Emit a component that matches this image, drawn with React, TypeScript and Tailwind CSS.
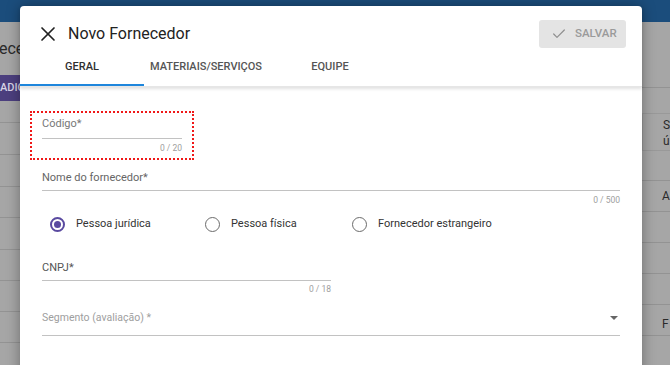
import { X, Check } from "lucide-react"

function Radio({ label, checked, width }: { label: string; checked?: boolean; width: string }) {
  return (
    <div className={`flex items-center ${width}`}>
      {checked ? (
        <span className="w-[15px] h-[15px] rounded-full border-2 border-[#5a4aa0] flex items-center justify-center">
          <span className="w-[7px] h-[7px] rounded-full bg-[#5a4aa0]" />
        </span>
      ) : (
        <span className="w-[15px] h-[15px] rounded-full border-[1.5px] border-[#6b6b6b]" />
      )}
      <span className="ml-[11px] text-[11px] text-[#333]">{label}</span>
    </div>
  )
}

export default function App() {
  return (
    <div className="relative w-[670px] h-[365px] overflow-hidden bg-[#a6a6a6] font-['Roboto',sans-serif]">
      {/* page behind the dialog, dimmed */}
      <div className="h-[22px] bg-[#1b4d7c]" />
      <div className="flex justify-between">
        {/* left strip */}
        <div className="w-[20px] overflow-hidden">
          <div className="h-[53px] flex items-center text-[16px] text-[#2a2a2a] whitespace-nowrap">
            <span className="-ml-[1px]">ece</span>
          </div>
          <div className="h-[26px] bg-[#4c3f7e] flex items-center text-[11px] font-medium text-[#d8d4e6] whitespace-nowrap">
            ADIC
          </div>
          <div className="h-[22px] border-b border-[#939393]" />
          <div className="h-[32px] border-b border-[#939393]" />
          <div className="h-[32px] border-b border-[#939393]" />
          <div className="h-[31px] border-b border-[#939393]" />
          <div className="h-[32px] border-b border-[#939393]" />
          <div className="h-[31px] border-b border-[#939393]" />
          <div className="h-[31px] border-b border-[#939393]" />
          <div className="h-[31px] border-b border-[#939393]" />
        </div>
        {/* right strip */}
        <div className="w-[28px] overflow-hidden text-[12px] text-[#2a2a2a]">
          <div className="h-[66px] border-b border-[#939393]" />
          <div className="h-[25px]" />
          <div className="h-[38px] border-l border-y border-[#999] pl-[20px] leading-[16px] pt-[3px]">
            <div>S</div>
            <div>ú</div>
          </div>
          <div className="h-[30px] border-b border-[#939393]" />
          <div className="h-[31px] border-b border-[#939393] pl-[20px] flex items-center">A</div>
          <div className="h-[31px] border-b border-[#939393]" />
          <div className="h-[31px] border-b border-[#939393]" />
          <div className="h-[31px] border-b border-[#939393]" />
          <div className="h-[31px] border-b border-[#939393] pl-[20px] flex items-end pb-[2px]">F</div>
        </div>
      </div>

      {/* dialog */}
      <div className="absolute left-[20px] top-[6px] w-[622px] h-[380px] bg-white rounded-t-[4px] shadow-[0_0_14px_rgba(0,0,0,0.35)]">
        <div className="shadow-[0_2px_3px_rgba(0,0,0,0.12)] border-b border-[#e6e6e6]">
          {/* header */}
          <div className="flex items-center justify-between pt-[14px] pl-[16px] pr-[16px]">
            <div className="flex items-center h-[28px]">
              <X size={24} strokeWidth={1.7} className="text-[#222]" />
              <span className="ml-[8px] text-[16px] text-[#222]">Novo Fornecedor</span>
            </div>
            <button className="w-[87px] h-[28px] rounded-[3px] bg-[#e4e4e4] flex items-center pl-[12px]">
              <Check size={16} strokeWidth={1.8} className="text-[#8f8f8f]" />
              <span className="ml-[8px] text-[11.5px] font-medium text-[#9a9a9a]">SALVAR</span>
            </button>
          </div>
          {/* tabs */}
          <div className="flex h-[38px] text-[11px] font-medium">
            <div className="w-[124px] flex items-center justify-center text-[#2f2f2f] border-b-2 border-[#1e86dc] pt-[2px]">GERAL</div>
            <div className="w-[124px] flex items-center justify-center text-[#555] border-b-2 border-transparent pt-[2px]">MATERIAIS/SERVIÇOS</div>
            <div className="w-[124px] flex items-center justify-center text-[#555] border-b-2 border-transparent pt-[2px]">EQUIPE</div>
          </div>
        </div>

        {/* form */}
        <div className="px-[22px] pt-[24px]">
          <div className="w-[164px] -ml-[12px] border-2 border-dotted border-[#f01818] px-[10px] pt-[3px] pb-[4px]">
            <div className="text-[11px] leading-[16px] text-[#777]">Código*</div>
            <div className="mt-[6px] h-px bg-[#c2c2c2]" />
            <div className="mt-[3px] text-right text-[8.5px] leading-[12px] text-[#9e9e9e]">0 / 20</div>
          </div>

          <div className="mt-[10px] text-[11px] leading-[16px] text-[#666]">Nome do fornecedor*</div>
          <div className="mt-[4px] h-px bg-[#c2c2c2]" />
          <div className="mt-[3px] text-right text-[8.5px] leading-[12px] text-[#9e9e9e]">0 / 500</div>

          <div className="mt-[8px] h-[20px] flex items-center pl-[8px]">
            <Radio label="Pessoa jurídica" checked width="w-[155px]" />
            <Radio label="Pessoa física" width="w-[147px]" />
            <Radio label="Fornecedor estrangeiro" width="w-[200px]" />
          </div>

          <div className="w-[289px]">
            <div className="mt-[26px] text-[11px] leading-[16px] text-[#555]">CNPJ*</div>
            <div className="mt-[4px] h-px bg-[#c2c2c2]" />
            <div className="mt-[2px] text-right text-[8.5px] leading-[12px] text-[#9e9e9e]">0 / 18</div>
          </div>

          <div className="mt-[15px] flex items-center justify-between">
            <span className="text-[10.5px] leading-[16px] text-[#9e9e9e]">Segmento (avaliação) *</span>
            <span className="mr-[2px] w-0 h-0 border-l-[4px] border-r-[4px] border-t-[4px] border-l-transparent border-r-transparent border-t-[#666]" />
          </div>
          <div className="mt-[9px] h-px bg-[#c2c2c2]" />
        </div>
      </div>
    </div>
  )
}
